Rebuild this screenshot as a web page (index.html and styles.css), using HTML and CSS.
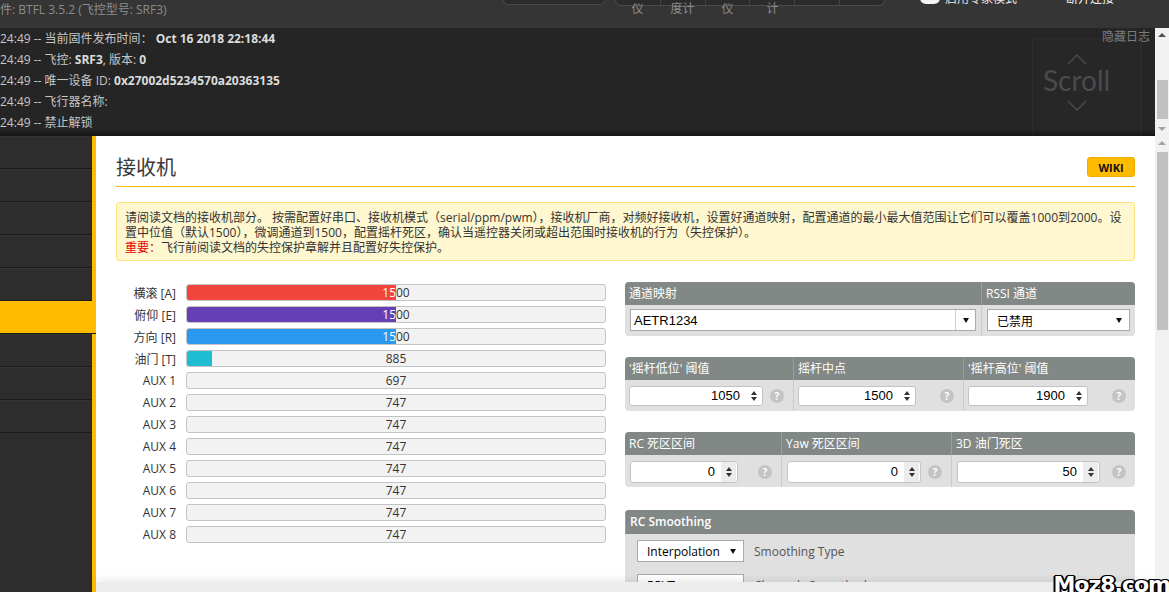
FILE: index.html
```html
<!DOCTYPE html>
<html lang="zh-CN">
<head>
<meta charset="utf-8">
<title>接收机</title>
<link rel="stylesheet" href="styles.css">
</head>
<body>
<div class="app">
  <header class="topbar">
    <div class="fw-info">件: BTFL 3.5.2 (飞控型号: SRF3)</div>
    <div class="port-box"></div>
    <div class="sensors">
      <div class="sensor-box"><span></span><span></span><span></span><span></span><span></span><span></span></div>
      <div class="sensor-labels"><span>仪</span><span>度计</span><span>仪</span><span>计</span><span></span><span></span></div>
    </div>
    <div class="expert"><span class="toggle"></span><span class="expert-text">启用专家模式</span></div>
    <div class="disconnect">断开连接</div>
  </header>

  <section class="logrow">
    <div class="log">
      <div class="log-lines">
        <p>24:49 -- 当前固件发布时间： <b>Oct 16 2018 22:18:44</b></p>
        <p>24:49 -- 飞控: <b>SRF3</b>, 版本: <b>0</b></p>
        <p>24:49 -- 唯一设备 ID: <b>0x27002d5234570a20363135</b></p>
        <p>24:49 -- 飞行器名称:</p>
        <p>24:49 -- 禁止解锁</p>
      </div>
      <div class="scroll-hint">
        <svg width="20" height="11" viewBox="0 0 20 11"><polyline points="1,10 10,1 19,10" fill="none" stroke="#4b4b4b" stroke-width="1.4"/></svg>
        <span class="scroll-word">Scroll</span>
        <svg width="20" height="11" viewBox="0 0 20 11"><polyline points="1,1 10,10 19,1" fill="none" stroke="#4b4b4b" stroke-width="1.4"/></svg>
      </div>
      <a class="hide-log">隐藏日志</a>
    </div>
    <div class="vscroll vscroll-log">
      <span class="sb-arrow sb-up dark"></span>
      <span class="sb-track"><span class="sb-thumb thumb-log"></span></span>
      <span class="sb-arrow sb-down"></span>
    </div>
  </section>

  <section class="workspace">
    <nav class="tabs">
      <div class="tab"></div>
      <div class="tab"></div>
      <div class="tab"></div>
      <div class="tab"></div>
      <div class="tab"></div>
      <div class="tab active"></div>
      <div class="tab"></div>
      <div class="tab"></div>
      <div class="tab"></div>
    </nav>
    <div class="accent"></div>
    <main class="content">
      <div class="content-body">
        <div class="tab-title">
          <h1>接收机</h1>
          <a class="wiki">WIKI</a>
        </div>
        <div class="note">
          <p>请阅读文档的接收机部分。 按需配置好串口、接收机模式（serial/ppm/pwm），接收机厂商，对频好接收机，设置好通道映射，配置通道的最小最大值范围让它们可以覆盖1000到2000。设<br>置中位值（默认1500），微调通道到1500，配置摇杆死区，确认当遥控器关闭或超出范围时接收机的行为（失控保护）。</p>
          <p><span class="important">重要：</span>飞行前阅读文档的失控保护章解并且配置好失控保护。</p>
        </div>

        <div class="columns">
          <div class="bars">
            <div class="bar-row"><span class="bar-label">横滚 [A]</span><div class="meter"><div class="meter-fill fill-red" style="width:50%"><span class="meter-in">1500</span></div><span class="meter-out">1500</span></div></div>
            <div class="bar-row"><span class="bar-label">俯仰 [E]</span><div class="meter"><div class="meter-fill fill-purple" style="width:50%"><span class="meter-in">1500</span></div><span class="meter-out">1500</span></div></div>
            <div class="bar-row"><span class="bar-label">方向 [R]</span><div class="meter"><div class="meter-fill fill-blue" style="width:50%"><span class="meter-in">1500</span></div><span class="meter-out">1500</span></div></div>
            <div class="bar-row"><span class="bar-label">油门 [T]</span><div class="meter"><div class="meter-fill fill-cyan" style="width:6.07%"><span class="meter-in">885</span></div><span class="meter-out">885</span></div></div>
            <div class="bar-row"><span class="bar-label">AUX 1</span><div class="meter"><span class="meter-out">697</span></div></div>
            <div class="bar-row"><span class="bar-label">AUX 2</span><div class="meter"><span class="meter-out">747</span></div></div>
            <div class="bar-row"><span class="bar-label">AUX 3</span><div class="meter"><span class="meter-out">747</span></div></div>
            <div class="bar-row"><span class="bar-label">AUX 4</span><div class="meter"><span class="meter-out">747</span></div></div>
            <div class="bar-row"><span class="bar-label">AUX 5</span><div class="meter"><span class="meter-out">747</span></div></div>
            <div class="bar-row"><span class="bar-label">AUX 6</span><div class="meter"><span class="meter-out">747</span></div></div>
            <div class="bar-row"><span class="bar-label">AUX 7</span><div class="meter"><span class="meter-out">747</span></div></div>
            <div class="bar-row"><span class="bar-label">AUX 8</span><div class="meter"><span class="meter-out">747</span></div></div>
          </div>

          <div class="settings">
            <div class="panel panel-map">
              <div class="ph">通道映射</div>
              <div class="ph">RSSI 通道</div>
              <div class="pb">
                <div class="select"><span class="select-text">AETR1234</span><span class="select-arrow sep"><i class="tri"></i></span></div>
              </div>
              <div class="pb">
                <div class="select"><span class="select-text indent">已禁用</span><span class="select-arrow"><i class="tri"></i></span></div>
              </div>
            </div>

            <div class="panel panel-stick">
              <div class="ph">'摇杆低位' 阈值</div>
              <div class="ph">摇杆中点</div>
              <div class="ph">'摇杆高位' 阈值</div>
              <div class="pb num-cell">
                <div class="num w134"><span class="num-val">1050</span><span class="spin"><i class="up"></i><i class="down"></i></span></div>
                <span class="help">?</span>
              </div>
              <div class="pb num-cell">
                <div class="num w117"><span class="num-val">1500</span><span class="spin"><i class="up"></i><i class="down"></i></span></div>
                <span class="help">?</span>
              </div>
              <div class="pb num-cell">
                <div class="num w120"><span class="num-val">1900</span><span class="spin"><i class="up"></i><i class="down"></i></span></div>
                <span class="help">?</span>
              </div>
            </div>

            <div class="panel panel-dead">
              <div class="ph">RC 死区区间</div>
              <div class="ph">Yaw 死区区间</div>
              <div class="ph">3D 油门死区</div>
              <div class="pb num-cell">
                <div class="num tall w108"><span class="num-val">0</span><span class="spin shaded"><i class="up"></i><i class="down"></i></span></div>
                <span class="help">?</span>
              </div>
              <div class="pb num-cell">
                <div class="num tall w134"><span class="num-val">0</span><span class="spin shaded"><i class="up"></i><i class="down"></i></span></div>
                <span class="help">?</span>
              </div>
              <div class="pb num-cell">
                <div class="num tall w143"><span class="num-val">50</span><span class="spin shaded"><i class="up"></i><i class="down"></i></span></div>
                <span class="help">?</span>
              </div>
            </div>

            <div class="panel panel-smooth">
              <div class="ph">RC Smoothing</div>
              <div class="pb smooth-body">
                <div class="smooth-row">
                  <div class="select small"><span class="select-text pad9">Interpolation</span><span class="select-arrow"><i class="tri"></i></span></div>
                  <span class="smooth-label">Smoothing Type</span>
                </div>
                <div class="smooth-row">
                  <div class="select small"><span class="select-text pad9">RPYT</span><span class="select-arrow"><i class="tri"></i></span></div>
                  <span class="smooth-label">Channels Smoothed</span>
                </div>
              </div>
            </div>
          </div>
        </div>
      </div>
      <div class="content-footer"></div>
    </main>
    <div class="vscroll vscroll-main">
      <span class="sb-arrow sb-up"></span>
      <span class="sb-track"><span class="sb-thumb thumb-main"></span></span>
      <span class="sb-arrow sb-down"></span>
    </div>
  </section>

  <div class="watermark">Moz8.com</div>
</div>
</body>
</html>
```

FILE: styles.css
```css
* { box-sizing: border-box; }
html, body { margin: 0; padding: 0; }
body {
  width: 1169px;
  height: 592px;
  overflow: hidden;
  background: #252525;
  font-family: "Open Sans", "Noto Sans CJK SC", sans-serif;
  font-size: 12px;
  color: #333;
}
.app {
  position: relative;
  width: 1169px;
  height: 592px;
  display: flex;
  flex-direction: column;
}

/* ---------- top bar ---------- */
.topbar {
  flex: 0 0 28px;
  height: 28px;
  background: #353535;
  display: flex;
  align-items: flex-start;
  overflow: hidden;
}
.fw-info {
  flex: 0 0 503px;
  margin-top: 2px;
  line-height: 16px;
  color: #8c8c8c;
  white-space: nowrap;
}
.port-box {
  width: 102px;
  height: 5px;
  background: #2b2b2b;
  border: 1px solid #4a4a4a;
  border-top: none;
  border-radius: 0 0 6px 6px;
}
.sensors {
  margin-left: 10px;
  width: 270px;
  display: flex;
  flex-direction: column;
}
.sensor-box {
  height: 6px;
  display: flex;
  background: #2b2b2b;
  border: 1px solid #4a4a4a;
  border-top: none;
  border-radius: 0 0 6px 6px;
}
.sensor-box span { flex: 1; border-right: 1px solid #454545; }
.sensor-box span:last-child { border-right: none; }
.sensor-labels {
  display: flex;
  margin-top: -4px;
}
.sensor-labels span {
  flex: 0 0 45px;
  text-align: center;
  line-height: 14px;
  color: #8c8c8c;
}
.expert {
  margin-left: 35px;
  display: flex;
  align-items: flex-start;
}
.toggle {
  width: 20px;
  height: 12px;
  margin-top: -8px;
  background: #f4f4f4;
  border-radius: 6px;
}
.expert-text {
  margin-left: 5px;
  margin-top: -8px;
  line-height: 14px;
  color: #e6e6e6;
}
.disconnect {
  margin-left: 49px;
  margin-top: -8px;
  line-height: 14px;
  color: #ffffff;
}

/* ---------- log ---------- */
.logrow {
  flex: 0 0 108px;
  display: flex;
}
.log {
  flex: 1;
  position: relative;
  overflow: hidden;
  background: #252525;
}
.log::after {
  content: "";
  position: absolute;
  left: 0; right: 0; bottom: 0;
  height: 7px;
  background: linear-gradient(rgba(0,0,0,0), rgba(0,0,0,0.45));
  z-index: 3;
}
.log-lines p {
  margin: 0;
  line-height: 21px;
  color: #c6c6c6;
  white-space: nowrap;
}
.log-lines b { color: #dcdcdc; font-weight: 700; }
.hide-log {
  position: absolute;
  top: 1px;
  right: 5px;
  line-height: 16px;
  color: #7d7d7d;
  z-index: 2;
}
.scroll-hint {
  position: absolute;
  top: 10px;
  right: 13px;
  width: 110px;
  height: 110px;
  background: #272727;
  border: 1px solid #2d2d2d;
  display: flex;
  flex-direction: column;
  align-items: center;
  padding: 15px 21px 0 0;
  z-index: 1;
}
.scroll-word {
  font-family: "Lato", "Open Sans", sans-serif;
  font-size: 28px;
  line-height: 30px;
  color: #4b4b4b;
  margin-bottom: 5px;
}

/* ---------- scrollbars ---------- */
.vscroll {
  flex: 0 0 14px;
  width: 14px;
  background: #f1f1f1;
  display: flex;
  flex-direction: column;
  align-items: center;
}
.sb-arrow {
  flex: 0 0 14px;
  display: flex;
  align-items: center;
  justify-content: center;
}
.sb-up::before {
  content: "";
  border-left: 4px solid transparent;
  border-right: 4px solid transparent;
  border-bottom: 4px solid #a3a3a3;
}
.sb-down::before {
  content: "";
  border-left: 4px solid transparent;
  border-right: 4px solid transparent;
  border-top: 4px solid #a3a3a3;
}
.sb-up.dark::before { border-bottom-color: #505050; }
.sb-track {
  flex: 1;
  width: 100%;
  padding: 0 1px 0 2px;
  display: flex;
  flex-direction: column;
}
.sb-thumb { background: #c1c1c1; display: block; }
.thumb-log { margin-top: 38px; height: 39px; }
.thumb-main { margin-top: 2px; height: 178px; }

/* ---------- workspace ---------- */
.workspace {
  flex: 1;
  display: flex;
  min-height: 0;
}
.tabs {
  flex: 0 0 92px;
  background: #2d2d2d;
}
.tab {
  height: 33px;
  border-bottom: 1px solid #1c1c1c;
  box-shadow: inset 0 1px 0 #333;
}
.tab.active {
  background: #ffbb00;
  box-shadow: none;
  margin-right: -4px;
  position: relative;
}
.accent {
  flex: 0 0 4px;
  background: #ffbb00;
}
.content {
  flex: 1;
  background: #fff;
  display: flex;
  flex-direction: column;
  min-width: 0;
}
.content-body {
  flex: 1;
  overflow: hidden;
  padding: 0 20px;
}
.content-footer {
  flex: 0 0 10px;
  background: #ececec;
  box-shadow: 0 -3px 6px rgba(0,0,0,0.07);
  position: relative;
}

/* title */
.tab-title {
  margin-top: 18px;
  height: 33px;
  padding-bottom: 6px;
  border-bottom: 1px solid #ffbb00;
  display: flex;
  align-items: center;
  justify-content: space-between;
}
.tab-title h1 {
  margin: 0;
  font-family: "Noto Sans CJK SC", sans-serif;
  font-size: 20px;
  font-weight: 400;
  line-height: 26px;
  color: #3a3a3a;
}
.wiki {
  width: 48px;
  height: 20px;
  line-height: 19px;
  text-align: center;
  background: #ffbb00;
  border: 1px solid #f0ad00;
  border-radius: 3px;
  font-size: 11px;
  font-weight: 700;
  color: #111;
}

/* note */
.note {
  margin-top: 15px;
  padding: 7px 8px 5px;
  background: #fef7cf;
  border: 1px solid #fde37f;
  border-radius: 3px;
}
.note p {
  margin: 0;
  line-height: 15px;
  color: #333;
  white-space: nowrap;
}
.important { color: #e60000; }

/* columns */
.columns {
  margin-top: 21px;
  display: flex;
  justify-content: space-between;
}
.bars {
  width: 490px;
  padding-top: 2px;
}
.bar-row {
  display: flex;
  align-items: center;
  height: 17px;
  margin-bottom: 5px;
}
.bar-label {
  flex: 0 0 60px;
  margin-right: 10px;
  text-align: right;
  color: #333;
  white-space: nowrap;
}
.meter {
  flex: 1;
  position: relative;
  height: 17px;
  background: #f2f2f2;
  border: 1px solid #c4c4c4;
  border-radius: 3px;
  overflow: hidden;
}
.meter-fill {
  position: relative;
  height: 100%;
  overflow: hidden;
  z-index: 2;
}
.fill-red { background: #f1453d; }
.fill-purple { background: #673fb4; }
.fill-blue { background: #2b98f0; }
.fill-cyan { background: #1fbcd2; }
.meter-in {
  position: absolute;
  left: 0;
  top: 0;
  width: 418px;
  text-align: center;
  line-height: 15px;
  color: #fff;
}
.meter-out {
  position: absolute;
  left: 0; right: 0; top: 0;
  text-align: center;
  line-height: 15px;
  color: #333;
  z-index: 1;
}

/* settings panels */
.settings { width: 510px; }
.panel {
  display: grid;
  background: #e0e0e0;
  border-radius: 4px;
  overflow: hidden;
  margin-bottom: 21px;
}
.panel-map { grid-template-columns: 356px 1fr; }
.panel-stick { grid-template-columns: 168px 170px 1fr; }
.panel-dead { grid-template-columns: 156px 170px 1fr; margin-bottom: 23px; }
.panel-smooth { grid-template-columns: 1fr; }
.ph {
  height: 23px;
  line-height: 23px;
  padding-left: 4px;
  background: #828885;
  color: #fff;
  white-space: nowrap;
  border-left: 1px solid #9a9f9c;
}
.panel-stick .ph:nth-child(1), .panel-dead .ph:nth-child(1), .panel-map .ph:nth-child(1) { border-left: none; }
.pb {
  padding: 4px 5px 5px;
  border-left: 1px solid #cbcbcb;
}
.panel-map .pb:nth-child(3),
.panel-stick .pb:nth-child(4),
.panel-dead .pb:nth-child(4),
.panel-smooth .pb { border-left: none; }

.select {
  display: flex;
  align-items: center;
  height: 22px;
  background: #fff;
  border: 1px solid #a9a9a9;
  font-family: "Liberation Sans", Arial, sans-serif;
  font-size: 13px;
  color: #000;
}
.select-text { flex: 1; padding-left: 3px; white-space: nowrap; }
.select-text.indent { padding-left: 9px; font-family: "Noto Sans CJK SC", sans-serif; font-size: 12px; }
.select-arrow {
  flex: 0 0 20px;
  height: 100%;
  display: flex;
  align-items: center;
  justify-content: center;
}
.select-arrow.sep { border-left: 1px solid #d0d0d0; }
.tri {
  display: block;
  border-left: 3px solid transparent;
  border-right: 3px solid transparent;
  border-top: 5px solid #111;
}

.num-cell {
  display: flex;
  align-items: center;
  padding: 6px 9px 5px 4px;
}
.panel-dead .num-cell { padding: 6px 9px 4px 5px; }
.num {
  display: flex;
  height: 20px;
  background: #fff;
  border: 1px solid #c3c3c3;
  border-radius: 3px;
  font-family: "Liberation Sans", Arial, sans-serif;
  font-size: 13px;
  color: #000;
}
.num.tall { height: 22px; }
.w108 { width: 108px; }
.w117 { width: 118px; }
.w120 { width: 120px; }
.w134 { width: 134px; }
.w143 { width: 143px; }
.num-val {
  flex: 1;
  text-align: right;
  padding-right: 6px;
  line-height: 18px;
}
.num.tall .num-val { line-height: 20px; }
.spin {
  flex: 0 0 15px;
  margin-right: 1px;
  display: flex;
  flex-direction: column;
  align-items: center;
  justify-content: center;
  gap: 2px;
}
.spin.shaded { background: #ececec; }
.spin .up {
  display: block;
  border-left: 3.5px solid transparent;
  border-right: 3.5px solid transparent;
  border-bottom: 4px solid #333;
}
.spin .down {
  display: block;
  border-left: 3.5px solid transparent;
  border-right: 3.5px solid transparent;
  border-top: 4px solid #333;
}
.help {
  margin-left: auto;
  width: 14px;
  height: 14px;
  border-radius: 50%;
  background: #c4c4c4;
  color: #fff;
  font-size: 10px;
  font-weight: 700;
  line-height: 14px;
  text-align: center;
}

.panel-smooth .ph { height: 24px; line-height: 24px; font-weight: 600; }
.smooth-body { padding: 6px 12px 4px; }
.smooth-row {
  display: flex;
  align-items: center;
  margin-bottom: 12px;
}
.select.small { width: 107px; font-family: "Open Sans", sans-serif; font-size: 12px; }
.select-text.pad9 { padding-left: 9px; }
.smooth-label {
  margin-left: 10px;
  color: #555;
}

/* watermark */
.watermark {
  position: absolute;
  right: -1px;
  bottom: -5px;
  font-family: "DejaVu Sans", sans-serif;
  font-weight: 700;
  font-size: 22px;
  color: #fff;
  letter-spacing: -1px;
  text-shadow: -1px -1px 0 #000, 1px -1px 0 #000, -1px 1px 0 #000, 1px 1px 0 #000, 0 2px 0 #000, 2px 0 0 #000, -2px 0 0 #000;
  z-index: 10;
}
```
